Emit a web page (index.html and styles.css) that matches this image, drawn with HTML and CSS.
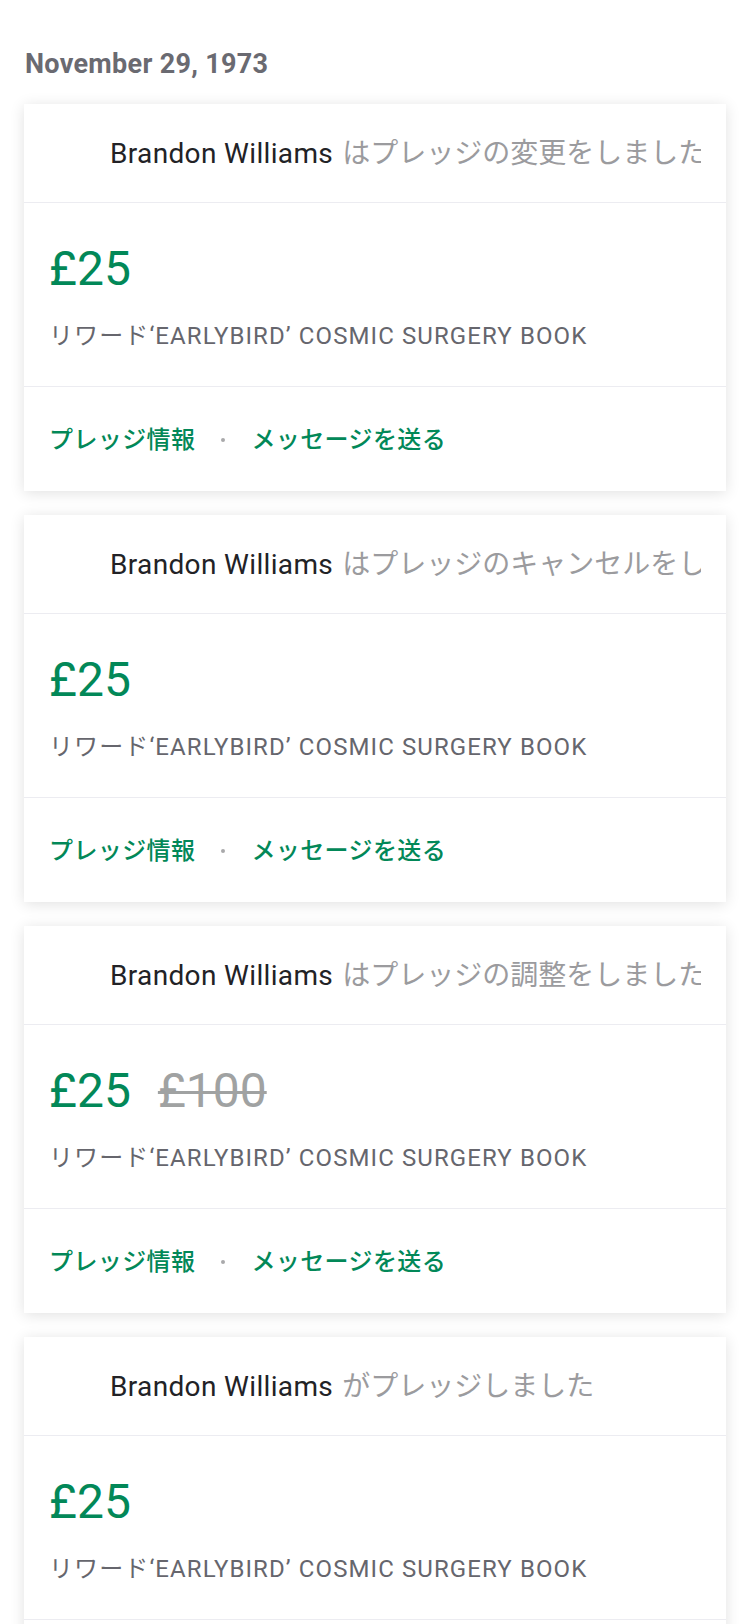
FILE: index.html
```html
<!DOCTYPE html>
<html lang="ja">
<head>
<meta charset="utf-8">
<title>Activity</title>
<link rel="stylesheet" href="styles.css">
</head>
<body>
<main class="page">
  <h2 class="date">November 29, 1973</h2>
  <div class="cards">
    <article class="card">
      <header class="card-head">
        <span class="avatar"></span>
        <p class="head-text"><span class="name">Brandon Williams</span> <span class="action">はプレッジの変更をしました</span></p>
      </header>
      <section class="card-body">
        <div class="amounts"><span class="amount">£25</span></div>
        <p class="reward">リワード‘EARLYBIRD’ COSMIC SURGERY BOOK</p>
      </section>
      <footer class="card-foot">
        <a class="link">プレッジ情報</a><span class="dot"></span><a class="link">メッセージを送る</a>
      </footer>
    </article>

    <article class="card">
      <header class="card-head">
        <span class="avatar"></span>
        <p class="head-text"><span class="name">Brandon Williams</span> <span class="action">はプレッジのキャンセルをしました</span></p>
      </header>
      <section class="card-body">
        <div class="amounts"><span class="amount">£25</span></div>
        <p class="reward">リワード‘EARLYBIRD’ COSMIC SURGERY BOOK</p>
      </section>
      <footer class="card-foot">
        <a class="link">プレッジ情報</a><span class="dot"></span><a class="link">メッセージを送る</a>
      </footer>
    </article>

    <article class="card">
      <header class="card-head">
        <span class="avatar"></span>
        <p class="head-text"><span class="name">Brandon Williams</span> <span class="action">はプレッジの調整をしました</span></p>
      </header>
      <section class="card-body">
        <div class="amounts"><span class="amount">£25</span><span class="amount old">£100</span></div>
        <p class="reward">リワード‘EARLYBIRD’ COSMIC SURGERY BOOK</p>
      </section>
      <footer class="card-foot">
        <a class="link">プレッジ情報</a><span class="dot"></span><a class="link">メッセージを送る</a>
      </footer>
    </article>

    <article class="card">
      <header class="card-head">
        <span class="avatar"></span>
        <p class="head-text"><span class="name">Brandon Williams</span> <span class="action">がプレッジしました</span></p>
      </header>
      <section class="card-body">
        <div class="amounts"><span class="amount">£25</span></div>
        <p class="reward">リワード‘EARLYBIRD’ COSMIC SURGERY BOOK</p>
      </section>
      <footer class="card-foot">
        <a class="link">プレッジ情報</a><span class="dot"></span><a class="link">メッセージを送る</a>
      </footer>
    </article>
  </div>
</main>
</body>
</html>
```

FILE: styles.css
```css
* {
  box-sizing: border-box;
}

html, body {
  margin: 0;
  padding: 0;
  background: #ffffff;
}

body {
  font-family: Roboto, "Noto Sans CJK JP", sans-serif;
  color: #222222;
}

.page {
  padding: 48px 24px 40px;
}

.date {
  margin: 0 0 24px 1px;
  font-size: 27px;
  line-height: 32px;
  font-weight: 700;
  letter-spacing: 0.3px;
  color: #6a6a71;
}

.cards {
  display: flex;
  flex-direction: column;
  gap: 24px;
}

.card {
  background: #ffffff;
  box-shadow: 0 2px 14px rgba(0, 0, 0, 0.12);
}

.card-head {
  height: 99px;
  display: flex;
  align-items: center;
  padding: 0 25px 0 24px;
  border-bottom: 1px solid #ececf1;
  overflow: hidden;
}

.avatar {
  flex: none;
  width: 48px;
  height: 48px;
  margin-right: 14px;
}

.head-text {
  margin: 0;
  flex: 1;
  min-width: 0;
  font-size: 28px;
  line-height: 33px;
  white-space: nowrap;
  overflow: hidden;
  text-overflow: clip;
}

.name {
  color: #222226;
  letter-spacing: 0.35px;
  margin-right: 2px;
}

.action {
  color: #9b9b9e;
}

.card-body {
  padding: 38px 25px 36px;
  border-bottom: 1px solid #ececf1;
}

.amounts {
  display: flex;
  gap: 27px;
  font-size: 48px;
  line-height: 56px;
}

.amount {
  color: #028858;
}

.amount.old {
  color: #a0a2a2;
  text-decoration: line-through;
  text-decoration-thickness: 3px;
}

.reward {
  margin: 25px 0 0;
  font-size: 24px;
  line-height: 28px;
  letter-spacing: 1.1px;
  color: #66666d;
}

.card-foot {
  height: 104px;
  display: flex;
  align-items: center;
  padding: 2px 25px 0;
}

.link {
  font-size: 24px;
  line-height: 28px;
  font-weight: 500;
  letter-spacing: 0.4px;
  color: #028858;
  text-decoration: none;
}

.dot {
  width: 4px;
  height: 4px;
  border-radius: 50%;
  background: #a9a9ab;
  margin: 0 26px;
}
```
